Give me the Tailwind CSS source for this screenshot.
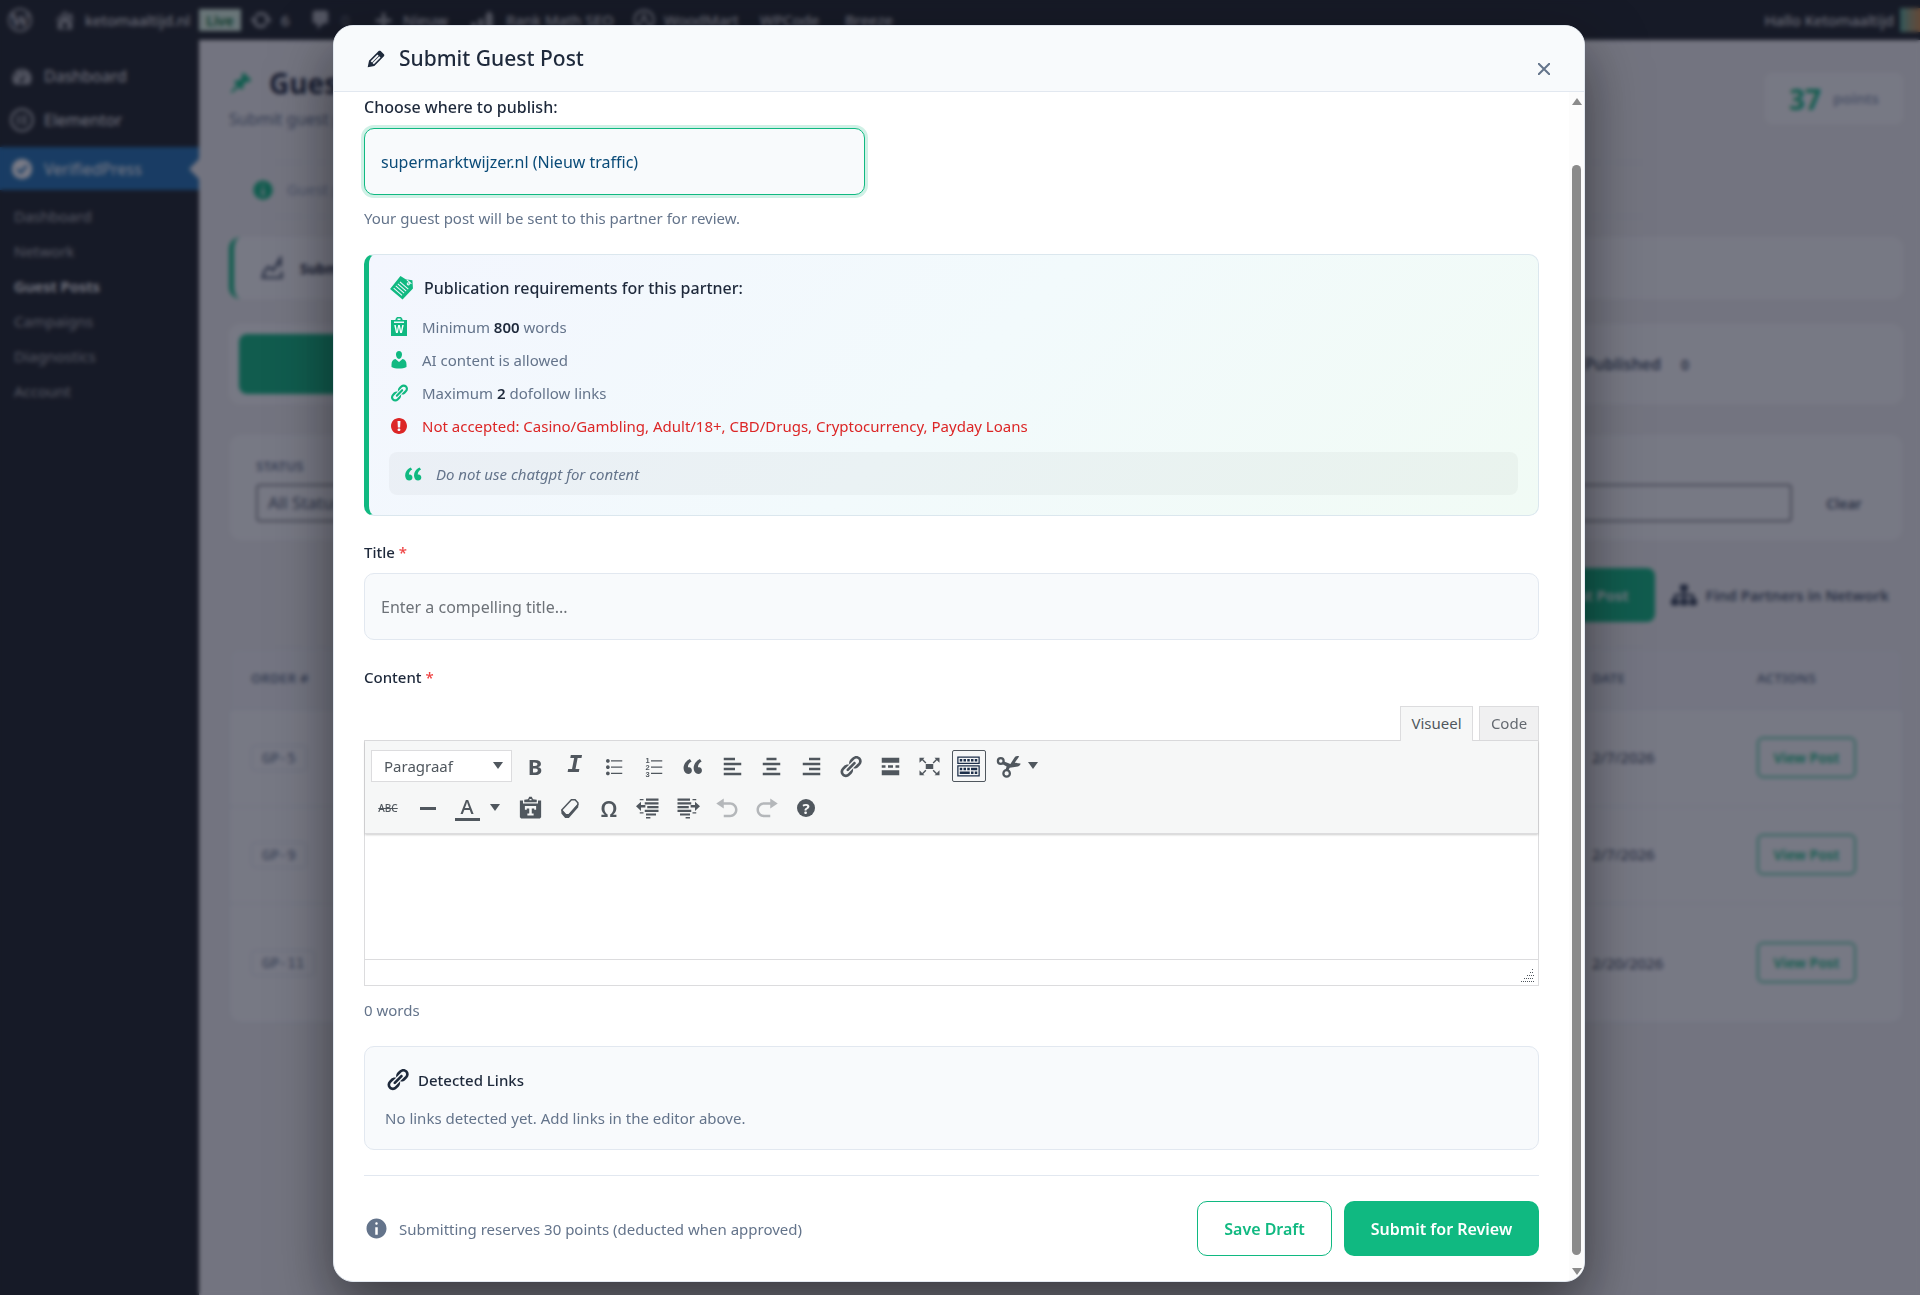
<!DOCTYPE html>
<html lang="nl">
<head>
	<meta charset="UTF-8">
	<meta name="viewport" content="width=device-width, initial-scale=1.0">
	<script src="https://cdn.jsdelivr.net/npm/@tailwindcss/browser@4"></script>
	<title>Guest Posts</title>
</head>
<body class="min-h-screen overflow-hidden bg-[#f0f0f1] font-['Noto_Sans',sans-serif] text-[#1e293b]">
	<!-- Icon sprite -->
	<svg class="hidden">
		<symbol id="link" viewBox="0 0 20 20"><path d="M17.74 2.76c1.68 1.69 1.68 4.41 0 6.1l-1.53 1.52c-1.12 1.12-2.7 1.47-4.14 1.09l2.62-2.61.76-.77.76-.76c.84-.84.84-2.2 0-3.04-.84-.85-2.2-.85-3.04 0l-.77.76-3.38 3.38c-.37-1.44-.02-3.02 1.1-4.14l1.52-1.53c1.69-1.68 4.42-1.68 6.1 0zM8.59 13.43l5.34-5.34c.42-.42.42-1.1 0-1.52-.44-.43-1.13-.39-1.53 0l-5.33 5.34c-.42.42-.42 1.1 0 1.52.44.43 1.13.39 1.52 0zm-.76 2.29l4.14-4.15c.38 1.44.03 3.02-1.09 4.14l-1.52 1.53c-1.69 1.68-4.41 1.68-6.1 0-1.68-1.68-1.68-4.42 0-6.1l1.53-1.52c1.12-1.12 2.7-1.47 4.14-1.1l-4.14 4.15c-.85.84-.85 2.2 0 3.05.84.84 2.2.84 3.04 0z"/></symbol>
		<symbol id="info" viewBox="0 0 20 20"><path d="M10 2c4.42 0 8 3.58 8 8s-3.58 8-8 8-8-3.58-8-8 3.58-8 8-8zm1 4c0-.55-.45-1-1-1s-1 .45-1 1 .45 1 1 1 1-.45 1-1zm0 9V9H9v6h2z"/></symbol>
		<symbol id="quote" viewBox="0 0 20 20"><path d="M9.49 13.22c0-.74-.2-1.38-.61-1.9-.62-.78-1.83-.88-2.53-.72-.29-1.65 1.11-3.75 2.92-4.65L7.88 4c-2.73 1.3-5.42 4.28-4.96 8.05C3.21 14.43 4.59 16 6.54 16c.85 0 1.56-.25 2.12-.75s.83-1.18.83-2.03zm8.05 0c0-.74-.2-1.38-.61-1.9-.63-.78-1.83-.88-2.53-.72-.29-1.65 1.11-3.75 2.92-4.65L15.93 4c-2.73 1.3-5.41 4.28-4.95 8.05.29 2.38 1.66 3.95 3.61 3.95.85 0 1.56-.25 2.12-.75s.83-1.18.83-2.03z"/></symbol>
		<symbol id="caret" viewBox="0 0 10 8"><path d="M0 0h10L5 7z"/></symbol>
	</svg>

	<!-- Admin bar -->
	<header class="flex h-10 items-center bg-[#1d2327] text-[15px] text-[#f0f0f1]">
		<a href="#" class="ml-2 w-[45px]" aria-label="WordPress">
			<svg class="h-6 w-6" viewBox="0 0 24 24"><circle cx="12" cy="12" r="11" fill="none" stroke="#a7aaad" stroke-width="2"/><text x="12" y="19" text-anchor="middle" font-size="19" font-family="Liberation Serif" font-weight="bold" fill="#c3c4c7">W</text></svg>
		</a>
		<a href="#" class="flex w-[146px] items-center gap-2">
			<svg class="h-6 w-6 shrink-0 fill-[#a7aaad]" viewBox="0 0 20 20"><path d="M16 8.5l1.53 1.53-1.06 1.06L10 4.6l-6.47 6.49-1.06-1.06L10 2.5l4 4v-2h2v4zm-6-2.46l6 5.99V18H4v-5.97zM12 17v-5H8v5h4z"/></svg>
			ketomaaltijd.nl
		</a>
		<a href="#" class="flex h-[22px] w-[42px] items-center justify-center bg-[#d9f2e0] text-[14px] font-semibold text-[#00672b]">Live</a>
		<a href="#" class="ml-2 flex w-[60px] items-center gap-2">
			<svg class="h-6 w-6 fill-[#a7aaad]" viewBox="0 0 20 20"><path d="M10.2 3.28c3.53 0 6.43 2.61 6.92 6h2.08l-3.5 4-3.5-4h2.32c-.45-1.97-2.21-3.45-4.32-3.45-1.45 0-2.73.71-3.54 1.78L4.95 5.66C6.23 4.2 8.11 3.28 10.2 3.28zm-.4 13.44c-3.52 0-6.43-2.61-6.92-6H.8l3.5-4c1.17 1.33 2.33 2.67 3.5 4H5.48c.45 1.97 2.21 3.45 4.32 3.45 1.45 0 2.73-.71 3.54-1.78l1.71 1.95c-1.28 1.46-3.15 2.38-5.25 2.38z"/></svg>
			6
		</a>
		<a href="#" class="flex w-[62px] items-center gap-2 text-[#a7aaad]/60">
			<svg class="h-6 w-6 fill-[#a7aaad]" viewBox="0 0 20 20"><path d="M5 2h9c1.1 0 2 .9 2 2v7c0 1.1-.9 2-2 2h-2l-5 5v-5H5c-1.1 0-2-.9-2-2V4c0-1.1.9-2 2-2z"/></svg>
			0
		</a>
		<a href="#" class="flex w-[99px] items-center gap-2">
			<svg class="h-6 w-6 fill-[#a7aaad]" viewBox="0 0 20 20"><path d="M17 9v3h-5v5H9v-5H4V9h5V4h3v5z"/></svg>
			Nieuw
		</a>
		<a href="#" class="flex w-[162px] items-center gap-3">
			<svg class="h-6 w-6 shrink-0 fill-[#a7aaad]" viewBox="0 0 20 20"><path d="M1 12h4v6H1zM7 9h4v9H7zM13 6l3-4 3 4v12h-6z"/></svg>
			Rank Math SEO
		</a>
		<a href="#" class="flex w-[128px] items-center gap-2">
			<svg class="h-6 w-6 shrink-0 fill-none stroke-[#a7aaad] stroke-2" viewBox="0 0 20 20"><circle cx="10" cy="10" r="8"/><path d="M6 15l4-9 4 9"/></svg>
			WoodMart
		</a>
		<a href="#" class="w-[85px]">WPCode</a>
		<a href="#">Breeze</a>
		<a href="#" class="ml-auto mr-[6px]">Hallo Ketomaaltijd</a>
		<span class="h-6 w-5 bg-linear-to-r from-[#4fae9b] to-[#c98a4a]"></span>
	</header>

	<div class="flex">
		<!-- Sidebar -->
		<nav class="min-h-[calc(100vh-40px)] w-[199px] shrink-0 bg-[#1d2327] pt-[14px] text-[16px] text-[#f0f0f1]">
			<a href="#" class="flex h-11 items-center gap-[10px] pl-[10px]">
				<svg class="h-6 w-6 fill-[#a7aaad]" viewBox="0 0 20 20"><path fill-rule="evenodd" d="M3.8 17h12.4c1.1-1.4 1.8-3.1 1.8-5 0-4.4-3.6-8-8-8s-8 3.600-8 8c0 1.900.7 3.600 1.800 5zM10 5.500a1 1 0 110 2 1 1 0 010-2zM5 8a1 1 0 110 2 1 1 0 010-2zm8.500 0L11 13.500a1.500 1.500 0 11-2-1z"/></svg>
				Dashboard
			</a>
			<a href="#" class="flex h-11 items-center gap-[10px] pl-[10px]">
				<svg class="h-6 w-6 fill-none stroke-[#a7aaad] stroke-2" viewBox="0 0 20 20"><circle cx="10" cy="10" r="9"/><path d="M7 6v8M10 7h4M10 10h4M10 13h4"/></svg>
				Elementor
			</a>
			<a href="#" class="relative mt-[5px] flex h-[43px] items-center gap-[10px] bg-[#2271b1] pl-[10px] text-white">
				<svg class="h-6 w-6" viewBox="0 0 20 20"><circle cx="10" cy="10" r="8.500" fill="#fff"/><path d="M6 10l3 3 5-6" fill="none" stroke="#2271b1" stroke-width="2"/></svg>
				VerifiedPress
				<svg class="absolute right-0 h-5 w-[10px] fill-[#f0f0f1]" viewBox="0 0 10 20"><path d="M10 0v20L0 10z"/></svg>
			</a>
			<div class="flex flex-col pt-[9px] pl-[14px] text-[15px] leading-[35px] text-[#f0f0f1]/70">
				<a href="#">Dashboard</a>
				<a href="#">Network</a>
				<a href="#" class="font-semibold text-white">Guest Posts</a>
				<a href="#">Campaigns</a>
				<a href="#">Diagnostics</a>
				<a href="#">Account</a>
			</div>
		</nav>

		<!-- Page content -->
		<main class="flex-1 pt-[25px] pr-[17px] pl-[30px]">
			<div class="flex justify-between">
				<div>
					<h1 class="flex items-center gap-4 text-[28px] leading-9 font-bold">
						<svg class="h-6 w-6 fill-[#10b981]" viewBox="0 0 20 20"><path d="M10.44 3.02l1.82-1.82 6.36 6.35-1.83 1.82c-1.05-.68-2.48-.57-3.41.36l-.75.75c-.92.93-1.04 2.35-.35 3.41l-1.83 1.82-2.41-2.41-2.8 2.79c-.42.42-3.38 2.71-3.8 2.29s1.86-3.39 2.28-3.81l2.79-2.79L4.1 9.36l1.83-1.82c1.05.69 2.48.57 3.4-.36l.75-.75c.93-.92 1.05-2.35.36-3.41z"/></svg>
						Guest Posts
					</h1>
					<p class="mt-[6px] text-[16px] leading-6 text-[#64748b]">Submit guest posts</p>
				</div>
				<div class="mt-2 flex h-[51px] w-[138px] items-center justify-center gap-3 rounded-lg bg-[#f9fafb] text-[15px] font-semibold text-[#94a3b8]"><span class="text-[28px] font-bold text-[#10b981]">37</span>points</div>
			</div>
			<div class="mt-[31px] flex h-[55px] items-center gap-3 rounded-xl border border-[#e2e8f0] pl-[21px] text-[15px] text-[#94a3b8]">
				<svg class="h-6 w-6 fill-[#10b981]" viewBox="0 0 20 20"><use href="#info"/></svg>
				Guest posts
			</div>
			<div class="mt-5 flex h-[62px] items-center gap-4 rounded-xl border-l-[5px] border-[#10b981] bg-[#f9fafb] pl-[26px] text-[14px] font-bold">
				<svg class="h-6 w-6 fill-none stroke-[#475569] stroke-2" viewBox="0 0 20 20"><path d="M1 18h17v-5M3 14l4-5 4 3 6-10v7M3 14v3"/></svg>
				Submit
			</div>
			<div class="mt-[25px] flex h-20 items-center justify-between rounded-xl bg-[#f9fafb] px-[10px]">
				<div class="h-[60px] w-1/5 rounded-lg bg-[#10b981]"></div>
				<div class="mr-[204px] flex items-center gap-5 text-[16px] font-semibold text-[#475569]">Published <span class="text-[14px]">0</span></div>
			</div>
			<div class="mt-[30px] h-[107px] rounded-xl border border-[#eceef1] bg-[#f9fafb] px-[26px] pt-5">
				<label for="status" class="block text-[13px] leading-[22px] font-semibold tracking-wide text-[#64748b]">STATUS</label>
				<div class="mt-[7px] flex items-center">
					<select id="status" class="h-[38px] w-1/4 appearance-none rounded border-2 border-[#8c8f94] px-[10px] text-[17px] text-[#475569]"><option>All Statuses</option></select>
					<input type="text" aria-label="Search" class="ml-10 h-[38px] flex-1 rounded border-2 border-[#8c8f94]">
					<button class="w-[84px] pl-5 text-[14px] font-semibold text-[#475569]">Clear</button>
				</div>
			</div>
			<div class="mt-[27px] flex items-center justify-end pr-[14px] text-[15px] font-semibold">
				<button class="h-[54px] rounded-lg bg-[#10b981] px-[26px] text-white">Submit Guest Post</button>
				<a href="#" class="ml-4 flex items-center gap-[9px] text-[#475569]">
					<svg class="h-[26px] w-[26px] fill-[#334155]" viewBox="0 0 20 20"><path d="M18 13h1c.55 0 1 .45 1 1.010v2.980c0 .56-.45 1.010-1 1.010h-4c-.55 0-1-.45-1-1.010v-2.980c0-.56.45-1.010 1-1.010h1v-2h-5v2h1c.55 0 1 .45 1 1.010v2.980c0 .56-.45 1.010-1 1.010H8c-.55 0-1-.45-1-1.010v-2.980c0-.56.45-1.010 1-1.010h1v-2H4v2h1c.55 0 1 .45 1 1.010v2.980c0 .56-.45 1.010-1 1.010H1c-.55 0-1-.45-1-1.010v-2.980c0-.56.45-1.010 1-1.010h1v-2c0-1.100.9-2 2-2h5V7H8c-.55 0-1-.45-1-1.010V3.010C7 2.450 7.450 2 8 2h4c.55 0 1 .45 1 1.010v2.980C13 6.550 12.550 7 12 7h-1v2h5c1.100 0 2 .9 2 2v2z"/></svg>
					Find Partners in Network
				</a>
			</div>
			<div class="mt-[26px] overflow-hidden rounded-xl border border-[#e2e8f0] bg-[#f9fafb]">
				<table class="w-full text-left text-[15px] text-[#334155]">
					<thead class="h-[60px] bg-[#f1f2f5] text-[13px] tracking-wide text-[#64748b]">
						<tr><th class="pl-[21px] font-semibold">ORDER #</th><th class="w-[165px] font-semibold">DATE</th><th class="w-[145px] font-semibold">ACTIONS</th></tr>
					</thead>
					<tbody>
						<tr class="h-[97px] border-t border-[#e2e8f0]">
							<td class="pl-[21px]"><span class="rounded border border-[#d5dbe3] px-[10px] py-1 font-['DejaVu_Sans_Mono',monospace] text-[14px] text-[#64748b]">GP-5</span></td>
							<td>2/7/2026</td>
							<td><button class="h-[41px] w-[99px] rounded-md border-2 border-[#10b981]/70 text-[14px] font-semibold text-[#10b981]">View Post</button></td>
						</tr>
						<tr class="h-[97px] border-t border-[#e2e8f0]">
							<td class="pl-[21px]"><span class="rounded border border-[#d5dbe3] px-[10px] py-1 font-['DejaVu_Sans_Mono',monospace] text-[14px] text-[#64748b]">GP-9</span></td>
							<td>2/7/2026</td>
							<td><button class="h-[41px] w-[99px] rounded-md border-2 border-[#10b981]/70 text-[14px] font-semibold text-[#10b981]">View Post</button></td>
						</tr>
						<tr class="h-[119px] border-t border-[#e2e8f0]">
							<td class="pl-[21px]"><span class="rounded border border-[#d5dbe3] px-[10px] py-1 font-['DejaVu_Sans_Mono',monospace] text-[14px] text-[#64748b]">GP-11</span></td>
							<td>2/20/2026</td>
							<td><button class="h-[41px] w-[99px] rounded-md border-2 border-[#10b981]/70 text-[14px] font-semibold text-[#10b981]">View Post</button></td>
						</tr>
					</tbody>
				</table>
			</div>
		</main>
	</div>

	<!-- Modal -->
	<div id="modal" class="fixed inset-0 z-10 flex items-start justify-center bg-[#121428]/56 pt-[25px] pr-[2px] backdrop-blur-[2px]">
		<div role="dialog" aria-labelledby="modal-title" class="w-full max-w-[1252px] overflow-hidden rounded-[20px] border border-[#e2e8f0] bg-white shadow-[0_25px_60px_rgba(0,0,0,0.5)]">
			<div class="flex h-[66px] items-center justify-between border-b border-[#e2e8f0] bg-[#f8fafc] pr-5 pl-[30px]">
				<h2 id="modal-title" class="flex items-center gap-[11px] text-[21px] font-medium">
					<svg class="h-6 w-6 fill-[#1e293b]" viewBox="0 0 20 20"><path d="M13.890 3.390l2.710 2.720c.46.46.42 1.240.03 1.640l-8.010 8.020-5.560 1.160 1.160-5.580s7.600-7.630 7.990-8.030c.39-.39 1.220-.39 1.680.07zm-2.730 2.790l-5.590 5.610 1.110 1.110 5.540-5.650zm-2.970 8.230l5.580-5.600-1.070-1.080-5.590 5.600z"/></svg>
					Submit Guest Post
				</h2>
				<button id="modal-close" aria-label="Close" class="flex h-11 w-10 items-center justify-center self-end">
					<svg class="h-3 w-3 stroke-[#64748b] stroke-2" viewBox="0 0 12 12"><path d="M0 0l12 12M12 0L0 12"/></svg>
				</button>
			</div>

			<div class="flex">
				<form class="flex-1 px-[30px] pt-1 pb-[25px] text-[15px] leading-5">
					<label for="partner" class="block text-[16px] leading-[22px] font-medium">Choose where to publish:</label>
					<select id="partner" class="mt-[10px] block h-[67px] w-[501px] appearance-none rounded-[10px] border border-[#10b981] bg-[#f8fafc] px-4 text-[16px] text-[#0a4b78] ring-3 ring-[#10b981]/20"><option>supermarktwijzer.nl (Nieuw traffic)</option></select>
					<p class="mt-[13px] text-[#64748b]">Your guest post will be sent to this partner for review.</p>

					<!-- Requirements -->
					<section class="mt-[26px] rounded-[10px] border border-l-[5px] border-[#dbe7ee] border-l-[#10b981] bg-linear-135 from-[#f3f6fe] via-[#f2fafc] to-[#f1fbf5] px-5 pt-5 pb-5 text-[#64748b]">
						<h3 class="flex items-center gap-[10px] text-[16px] leading-6 font-medium text-[#1e293b]">
							<svg class="h-[25px] w-[25px]" viewBox="0 0 24 24"><path d="M11 1l5 3 6.500 1 .5 8-10 10.500L1 13.500z" fill="#10b981"/><path d="M17 4.500l4.500 4M18.500 7.500a1 1 0 10.1 0M10.500 6.500l8 7M8.500 8.500l8 7M6.500 10.500l8 7M4.500 12.500l8 7" fill="none" stroke="#f3f7fe"/></svg>
							Publication requirements for this partner:
						</h3>
						<ul class="mt-[10px]">
							<li class="flex h-[33px] items-center gap-[13px]">
								<svg class="h-5 w-5" viewBox="0 0 20 20"><path fill="#10b981" fill-rule="evenodd" d="M2 3h4.500V2L8 0h4l1.500 2v1H18v16H2zM8.500 1.500v1.500h3V1.500zM5 4.500V6h10V4.500z"/><text x="10" y="16" text-anchor="middle" font-family="Liberation Sans" font-size="10" font-weight="bold" fill="#fff">W</text></svg>
								<span>Minimum <strong class="font-semibold text-[#1e293b]">800</strong> words</span>
							</li>
							<li class="flex h-[33px] items-center gap-[13px]">
								<svg class="h-5 w-5 fill-[#10b981]" viewBox="0 0 20 20"><path d="M10 1c1.900 0 3 1.500 3 3.500S11.800 9 10 9 7 6.500 7 4.500 8.100 1 10 1zM6.500 9L10 12l3.500-3c2.500.5 4 2 4 5.500V17c-2 1-4.700 1.500-7.500 1.500S4.500 18 2.500 17v-2.500c0-3.500 1.500-5 4-5.500z"/></svg>
								AI content is allowed
							</li>
							<li class="flex h-[33px] items-center gap-[13px]">
								<svg class="h-5 w-5 fill-[#10b981]" viewBox="0 0 20 20"><use href="#link"/></svg>
								<span>Maximum <strong class="font-semibold text-[#1e293b]">2</strong> dofollow links</span>
							</li>
							<li class="flex h-[33px] items-center gap-[13px] text-[#dc2626]">
								<svg class="h-5 w-5 fill-[#dc2626]" viewBox="0 0 20 20"><path d="M10 2c4.420 0 8 3.580 8 8s-3.580 8-8 8-8-3.580-8-8 3.580-8 8-8zm1.130 9.380l.35-6.460H8.520l.35 6.460h2.260zm-.09 3.360c.24-.23.37-.55.37-.96 0-.42-.12-.74-.36-.97s-.59-.35-1.060-.35-.82.12-1.070.35-.37.55-.37.97c0 .41.13.73.38.96.26.23.61.34 1.060.34s.8-.11 1.050-.34z"/></svg>
								Not accepted: Casino/Gambling, Adult/18+, CBD/Drugs, Cryptocurrency, Payday Loans
							</li>
						</ul>
						<p class="mt-[10px] flex h-[43px] items-center gap-3 rounded-lg bg-black/3 px-[13px] italic">
							<svg class="h-[22px] w-[22px] fill-[#10b981]" viewBox="0 0 20 20"><use href="#quote"/></svg>
							Do not use chatgpt for content
						</p>
					</section>

					<label for="title" class="mt-[26px] block font-medium">Title <span class="text-[#ef4444]">*</span></label>
					<input id="title" type="text" placeholder="Enter a compelling title..." class="mt-[11px] block h-[67px] w-full rounded-[10px] border border-[#e2e8f0] bg-[#f8fafc] px-4 text-[16px] placeholder:text-[#6d7278]">

					<label for="content" class="mt-[27px] block font-medium">Content <span class="text-[#ef4444]">*</span></label>

					<!-- Editor tabs -->
					<div class="mt-[19px] flex justify-end gap-[6px] text-[#50575e]">
						<button type="button" class="relative -mb-px h-[35px] w-[73px] border border-b-0 border-[#dcdcde] bg-[#f6f7f7] pb-[2px]">Visueel</button>
						<button type="button" class="h-[34px] w-[60px] border border-b-0 border-[#dcdcde] bg-[#f0f0f1] pb-px text-[#646970]">Code</button>
					</div>

					<!-- Editor -->
					<div class="border border-[#dcdcde]">
						<div class="border-b border-[#dcdcde] bg-[#f6f7f7] px-[6px] py-[9px] text-[#50575e] shadow-[0_1px_2px_rgba(0,0,0,0.2)]">
							<div class="flex items-center">
								<button type="button" class="flex h-8 w-[141px] items-center justify-between border border-[#dcdcde] bg-white pr-2 pl-3">Paragraaf
									<svg class="h-2 w-[10px] fill-[#50575e]"><use href="#caret"/></svg>
								</button>
								<div class="ml-[6px] flex w-[468px] justify-between">
									<button type="button" class="flex h-8 w-[34px] items-center justify-center text-[22px] font-bold">B</button>
									<button type="button" class="flex h-8 w-[34px] items-center justify-center font-['Liberation_Mono',monospace] text-[25px] font-bold italic">I</button>
									<button type="button" class="flex h-8 w-[34px] items-center justify-center" aria-label="Bulleted list"><svg class="h-[25px] w-[25px] fill-current" viewBox="0 0 20 20"><path d="M5.500 7C4.670 7 4 6.330 4 5.500 4 4.680 4.670 4 5.500 4 6.320 4 7 4.680 7 5.500 7 6.330 6.320 7 5.500 7zM8 5h9v1H8V5zm-2.500 7c-.83 0-1.500-.67-1.500-1.500C4 9.680 4.670 9 5.500 9c.82 0 1.500.68 1.500 1.500 0 .83-.68 1.500-1.500 1.500zM8 10h9v1H8v-1zm-2.500 7c-.83 0-1.500-.67-1.500-1.500 0-.82.67-1.500 1.500-1.500.82 0 1.500.68 1.500 1.500 0 .83-.68 1.500-1.500 1.500zM8 15h9v1H8v-1z"/></svg></button>
									<button type="button" class="flex h-8 w-[34px] items-center justify-center" aria-label="Numbered list"><svg class="h-[25px] w-[25px] fill-current" viewBox="0 0 20 20"><path d="M8 5h9v1H8zM8 10h9v1H8zM8 15h9v1H8z"/><g font-family="Liberation Sans" font-size="6" font-weight="bold"><text x="3.500" y="7">1</text><text x="3.500" y="12.500">2</text><text x="3.500" y="18">3</text></g></svg></button>
									<button type="button" class="flex h-8 w-[34px] items-center justify-center" aria-label="Blockquote"><svg class="h-[25px] w-[25px] fill-current"><use href="#quote"/></svg></button>
									<button type="button" class="flex h-8 w-[34px] items-center justify-center" aria-label="Align left"><svg class="h-[25px] w-[25px] fill-current" viewBox="0 0 20 20"><path d="M12 5V3H3v2h9zm5 4V7H3v2h14zm-5 4v-2H3v2h9zm5 4v-2H3v2h14z"/></svg></button>
									<button type="button" class="flex h-8 w-[34px] items-center justify-center" aria-label="Align center"><svg class="h-[25px] w-[25px] fill-current" viewBox="0 0 20 20"><path d="M14 5V3H6v2h8zm3 4V7H3v2h14zm-3 4v-2H6v2h8zm3 4v-2H3v2h14z"/></svg></button>
									<button type="button" class="flex h-8 w-[34px] items-center justify-center" aria-label="Align right"><svg class="h-[25px] w-[25px] fill-current" viewBox="0 0 20 20"><path d="M17 5V3H8v2h9zm0 4V7H3v2h14zm0 4v-2H8v2h9zm0 4v-2H3v2h14z"/></svg></button>
									<button type="button" class="flex h-8 w-[34px] items-center justify-center" aria-label="Insert link"><svg class="h-[25px] w-[25px] fill-current"><use href="#link"/></svg></button>
									<button type="button" class="flex h-8 w-[34px] items-center justify-center" aria-label="Read more"><svg class="h-[25px] w-[25px] fill-current" viewBox="0 0 20 20"><path d="M17 7V3H3v4h14zM6 11V9H3v2h3zm6 0V9H8v2h4zm5 0V9h-3v2h3zm0 6v-4H3v4h14z"/></svg></button>
									<button type="button" class="flex h-8 w-[34px] items-center justify-center" aria-label="Fullscreen"><svg class="h-[25px] w-[25px] fill-current" viewBox="0 0 20 20"><path d="M7 8h6v4H7zM2 3h4L4.900 4.100 7.500 6.700l-.8.8-2.600-2.600L2 7zM18 3h-4l1.100 1.100-2.600 2.600.8.8 2.600-2.600L18 7zM2 17h4l-1.100-1.100 2.600-2.600-.8-.8-2.600 2.600L2 13zM18 17h-4l1.100-1.100-2.600-2.600.8-.8 2.600 2.600L18 13z"/></svg></button>
									<button type="button" class="flex h-8 w-[34px] items-center justify-center rounded-xs border border-[#50575e] text-[#1d2f4a]" aria-label="Toolbar toggle"><svg class="h-[25px] w-[25px] shrink-0 fill-current" viewBox="0 0 20 20"><path d="M19 2v6H1V2h18zm-1 5V3H2v4h16zM5 4v2H3V4h2zm3 0v2H6V4h2zm3 0v2H9V4h2zm3 0v2h-2V4h2zm3 0v2h-2V4h2zm2 5v9H1V9h18zm-1 8v-7H2v7h16zM5 11v2H3v-2h2zm3 0v2H6v-2h2zm3 0v2H9v-2h2zm6 0v2h-5v-2h5zm-6 3v2H3v-2h8zm3 0v2h-2v-2h2zm3 0v2h-2v-2h2z"/></svg></button>
								</div>
								<button type="button" class="ml-[10px] flex h-8 items-center gap-[7px]" aria-label="Cut"><svg class="h-[25px] w-[25px]" viewBox="0 0 20 20"><g fill="none" stroke="currentColor" stroke-width="1.800"><circle cx="3.800" cy="5.500" r="2.300"/><circle cx="8.500" cy="15.500" r="2.600"/></g><path fill="currentColor" d="M5 8l1.500-2 5 2 3.500-5.500c1.500-1.300 3.500-1 3.500-.5L15 7l4.500.5c.5.5-.5 2-2 2.500L11 11l-1.500 2.500-2-.5 1-3z"/></svg><svg class="h-2 w-[10px] fill-current"><use href="#caret"/></svg></button>
							</div>
							<div class="mt-[10px] flex items-center">
								<div class="flex w-[113px] justify-between">
									<button type="button" class="flex h-8 w-[34px] items-center justify-center text-[10px] font-medium line-through">ABC</button>
									<button type="button" class="flex h-8 w-[34px] items-center justify-center" aria-label="Horizontal line"><span class="h-[3px] w-4 bg-current"></span></button>
									<button type="button" class="flex h-8 w-[34px] items-center justify-center"><span class="w-[25px] border-b-3 border-current text-[20px] leading-[22px] font-medium">A</span></button>
								</div>
								<button type="button" class="ml-[6px] flex h-8 w-[10px] items-center" aria-label="Text color options"><svg class="h-2 w-[10px] fill-current"><use href="#caret"/></svg></button>
								<div class="ml-[13px] flex w-[310px] justify-between">
									<button type="button" class="flex h-8 w-[34px] items-center justify-center" aria-label="Paste as text"><svg class="h-[25px] w-[25px]" viewBox="0 0 20 20"><path fill="currentColor" fill-rule="evenodd" d="M1.500 3.500H4V6h12V3.500h2.500V17l-1 1h-15l-1-1zM5 5V3l3-.5L9 .5h2l1 2 3 .5v2zM9.200 2.300v1h1.600v-1zM5.500 8v3H7v-1h2v4H7.500v1.500h5V14H11v-4h2v1h1.500V8z"/></svg></button>
									<button type="button" class="flex h-8 w-[34px] items-center justify-center" aria-label="Clear formatting"><svg class="h-[25px] w-[25px]" viewBox="0 0 20 20"><path fill="none" stroke="currentColor" stroke-width="1.200" d="M11.500 3h3l2.200 2.500v1.500L9.500 15H7l-3-3.500V11z"/><path fill="currentColor" d="M3.500 10.500L7 14.500h2.500l7.500-8.500V9L9.500 17.500H6.500l-3-3.500z"/></svg></button>
									<button type="button" class="flex h-8 w-[34px] items-center justify-center text-[22px] font-semibold">&Omega;</button>
									<button type="button" class="flex h-8 w-[34px] items-center justify-center" aria-label="Outdent"><svg class="h-[25px] w-[25px] fill-current" viewBox="0 0 20 20"><path d="M3 3.300V2.300h3v1zM8 2h10v1.800H8zM7 5h11v1.800H7zM9 8h9v1.800H9zM7 11h11v1.800H7zM3 14v-1h3v1zM8 14h8v1.500H8zM8 18v-1.300h3.500V18zM0 8.200l4-3.700v2.700h3.500v2H4v2.700z"/></svg></button>
									<button type="button" class="flex h-8 w-[34px] items-center justify-center" aria-label="Indent"><svg class="h-[25px] w-[25px] fill-current" viewBox="0 0 20 20"><path d="M14 3.300V2.300h3v1zM2 2h10v1.800H2zM2 5h11v1.800H2zM2 8h9v1.800H2zM2 11h11v1.800H2zM14 14v-1h3v1zM4 14h8v1.500H4zM8.500 18v-1.300H12V18zM20 8.200l-4-3.700v2.700h-3.500v2H16v2.700z"/></svg></button>
									<button type="button" class="flex h-8 w-[34px] items-center justify-center text-[#b4b7ba]" aria-label="Undo"><svg class="h-[25px] w-[25px] fill-current" viewBox="0 0 20 20"><path d="M12 5H7V2L1 6l6 4V7h5c2.200 0 4 1.800 4 4s-1.800 4-4 4H7v2h5c3.300 0 6-2.700 6-6s-2.700-6-6-6z"/></svg></button>
									<button type="button" class="flex h-8 w-[34px] items-center justify-center text-[#b4b7ba]" aria-label="Redo"><svg class="h-[25px] w-[25px] fill-current" viewBox="0 0 20 20"><path d="M8 5h5V2l6 4-6 4V7H8c-2.200 0-4 1.800-4 4s1.800 4 4 4h5v2H8c-3.300 0-6-2.700-6-6s2.700-6 6-6z"/></svg></button>
									<button type="button" class="flex h-8 w-[34px] items-center justify-center"><span class="flex h-[18px] w-[18px] items-center justify-center rounded-full bg-[#50575e] text-[15px] leading-none font-bold text-[#f6f7f7]">?</span></button>
								</div>
							</div>
						</div>
						<textarea id="content" class="block h-[125px] w-full resize-none"></textarea>
						<div class="flex h-[26px] items-end justify-end border-t border-[#dcdcde] pr-1 pb-[3px]">
							<svg class="h-[13px] w-[13px] fill-none stroke-[#50575e] stroke-1 [stroke-dasharray:1_1]" viewBox="0 0 13 13"><path d="M11 .5h2M9 3.500h4M6 6.500h7M3 9.500h10M0 12.500h13"/></svg>
						</div>
					</div>
					<p class="mt-[14px] text-[#64748b]">0 words</p>

					<!-- Detected links -->
					<section class="mt-[26px] rounded-[10px] border border-[#e2e8f0] bg-[#f8fafc] px-5 py-5">
						<h4 class="flex items-center gap-2 leading-[22px] font-medium">
							<svg class="h-[25px] w-[25px] fill-[#1e293b]"><use href="#link"/></svg>
							Detected Links
						</h4>
						<p class="mt-4 mb-px text-[#64748b]">No links detected yet. Add links in the editor above.</p>
					</section>

					<!-- Footer -->
					<div class="mt-[25px] flex items-center border-t border-[#e2e8f0] pt-[25px]">
						<p class="flex items-center gap-[10px] text-[#64748b]">
							<svg class="h-[25px] w-[25px] fill-[#64748b]"><use href="#info"/></svg>
							Submitting reserves 30 points (deducted when approved)
						</p>
						<button type="button" class="ml-auto h-[55px] w-[135px] rounded-[10px] border border-[#10b981] text-[16px] font-semibold text-[#10b981]">Save Draft</button>
						<button type="submit" class="ml-3 h-[55px] w-[195px] rounded-[10px] bg-[#10b981] text-[16px] font-semibold text-white">Submit for Review</button>
					</div>
				</form>

				<!-- Scroll track -->
				<div class="flex w-[15px] flex-col items-center bg-[#fcfcfc] py-[5px]">
					<svg class="h-2 w-[10px] rotate-180 fill-[#8b8b8b]"><use href="#caret"/></svg>
					<div class="mt-[60px] mb-[13px] w-[9px] flex-1 rounded-full bg-[#8b8b8b]"></div>
					<svg class="h-2 w-[10px] fill-[#8b8b8b]"><use href="#caret"/></svg>
				</div>
			</div>
		</div>
	</div>
	<script>
		const closeButton = document.getElementById("modal-close");
		closeButton.addEventListener("click", function() {
			document.getElementById("modal").classList.toggle("hidden");
		});
	</script>
</body>
</html>
